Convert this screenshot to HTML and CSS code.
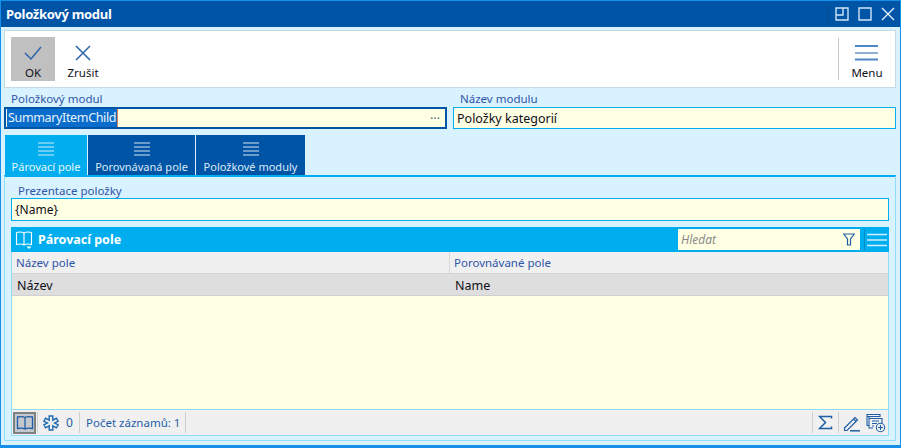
FILE: index.html
```html
<!DOCTYPE html>
<html lang="cs">
<head>
    <meta charset="UTF-8">
    <title>Položkový modul</title>
    <link rel="stylesheet" href="styles.css">
</head>
<body>
    <div class="window">
        <div class="titlebar">
            <div class="title">Položkový modul</div>
            <div class="win-buttons">
                <svg width="18" height="18" viewBox="0 0 18 18" fill="none" stroke="#cfe6f7" stroke-width="1.4"><path d="M3 3h12v12H3zM3 10h7V3"/></svg>
                <svg width="18" height="18" viewBox="0 0 18 18" fill="none" stroke="#cfe6f7" stroke-width="1.4"><path d="M3 3h12v12H3z"/></svg>
                <svg width="18" height="18" viewBox="0 0 18 18" fill="none" stroke="#e4f1fb" stroke-width="1.4"><path d="M3 3l12 12M15 3L3 15"/></svg>
            </div>
        </div>
        <div class="content">
            <div class="toolbar">
                <div class="tool tool-active">
                    <svg width="20" height="20" viewBox="0 0 20 20" fill="none" stroke="#2a64a8" stroke-width="1.5"><path d="M2 10l6 6L18 4"/></svg>
                    <span>OK</span>
                </div>
                <div class="tool">
                    <svg width="20" height="20" viewBox="0 0 20 20" fill="none" stroke="#2a64a8" stroke-width="1.5"><path d="M3 3l14 14M17 3L3 17"/></svg>
                    <span>Zrušit</span>
                </div>
                <div class="tool tool-menu">
                    <svg width="24" height="20" viewBox="0 0 24 20"><path d="M0 3h23" stroke="#4d88c4" stroke-width="2"/><path d="M0 10h23" stroke="#1f5ea6" stroke-width="1"/><path d="M0 16.500h23" stroke="#4d88c4" stroke-width="2"/></svg>
                    <span>Menu</span>
                </div>
            </div>

            <div class="fields">
                <div class="field">
                    <label class="field-label">Položkový modul</label>
                    <div class="input input-focus">
                        <span class="selected">SummaryItemChild</span>
                        <span class="dots">···</span>
                    </div>
                </div>
                <div class="field">
                    <label class="field-label">Název modulu</label>
                    <div class="input">Položky kategorií</div>
                </div>
            </div>

            <div class="tabs">
                <div class="tab tab-active">
                    <svg class="tab-icon" width="16" height="14" viewBox="0 0 16 14"><path d="M0 1h16M0 5h16M0 9h16M0 13h16" stroke="#8fd8f7" stroke-width="1.500"/></svg>
                    <span>Párovací pole</span>
                </div>
                <div class="tab tab-two">
                    <svg class="tab-icon" width="16" height="14" viewBox="0 0 16 14"><path d="M0 1h16M0 5h16M0 9h16M0 13h16" stroke="#8fb4d8" stroke-width="1.500"/></svg>
                    <span>Porovnávaná pole</span>
                </div>
                <div class="tab tab-three">
                    <svg class="tab-icon" width="16" height="14" viewBox="0 0 16 14"><path d="M0 1h16M0 5h16M0 9h16M0 13h16" stroke="#8fb4d8" stroke-width="1.500"/></svg>
                    <span>Položkové moduly</span>
                </div>
            </div>

            <div class="panel">
                <label class="field-label panel-label">Prezentace položky</label>
                <div class="input panel-input">{Name}</div>

                <div class="grid">
                    <div class="grid-head">
                        <svg width="18" height="19" viewBox="0 0 18 19" fill="none" stroke="#fff" stroke-width="1.100"><path d="M9 3C7.500 2 3.500 2 1.500 2.500v12c2-.5 6-.5 7.500.5 1.500-1 5.500-1 7.500-.5v-12C14.500 2 10.500 2 9 3zM9 3v12"/><path d="M11.500 16.500h5l-2.500 2.500z" fill="#fff" stroke="none"/></svg>
                        <div class="grid-title">Párovací pole</div>
                        <div class="search">
                            <span>Hledat</span>
                            <svg width="12" height="13" viewBox="0 0 12 13" fill="none" stroke="#1f5ea6" stroke-width="1.200"><path d="M.7 1h10.600L7.500 6v6h-3V6z"/></svg>
                        </div>
                        <div class="grid-menu">
                            <svg width="20" height="14" viewBox="0 0 20 14" stroke="#cdeefc"><path d="M0 1.500h20M0 7h20M0 12.500h20" stroke-width="1.300"/></svg>
                        </div>
                    </div>
                    <div class="grid-row grid-cols">
                        <div class="cell">Název pole</div>
                        <div class="cell">Porovnávané pole</div>
                    </div>
                    <div class="grid-row grid-data">
                        <div class="cell">Název</div>
                        <div class="cell">Name</div>
                    </div>
                    <div class="grid-empty"></div>
                    <div class="statusbar">
                        <div class="status-btn">
                            <svg width="18" height="16" viewBox="0 0 18 16" fill="none" stroke="#1f5ea6" stroke-width="1.300"><path d="M9 2.500C7.500 1.500 4 1.500 1.500 2v11.500c2.500-.5 6-.5 7.500.5 1.500-1 5-1 7.500-.5V2C14 1.500 10.500 1.500 9 2.500zM9 2.500V14"/></svg>
                        </div>
                        <div class="status-item status-snow">
                            <svg width="16" height="16" viewBox="0 0 16 16" fill="none" stroke="#1f6ab0" stroke-width="1.400"><path d="M6.200 1h3.600v4.200l3.600-2.100 1.800 3.100L11.600 8l3.600 1.800-1.800 3.100-3.600-2.100V15H6.200v-4.200l-3.600 2.100L.8 9.800 4.400 8 .8 6.200l1.800-3.100 3.600 2.100z"/></svg>
                            <span>0</span>
                        </div>
                        <div class="status-item status-count">Počet záznamů: 1</div>
                        <div class="status-spacer"></div>
                        <div class="status-icon">
                            <svg width="15" height="15" viewBox="0 0 15 15" fill="none" stroke="#1f5ea6" stroke-width="1.500"><path d="M13.500 3.500V1.500H1.500L7.500 7.500 1.500 13.500H13.500V11.500"/></svg>
                        </div>
                        <div class="status-icon">
                            <svg width="18" height="18" viewBox="0 0 18 18" fill="none" stroke="#1f5ea6" stroke-width="1.200"><path d="M1.500 14L12 3.500 14.500 6 4 16.500H1.500zM10.500 5L13 7.500"/><path d="M7 16.800h10" stroke-width="1.500"/></svg>
                        </div>
                        <div class="status-add">
                            <svg width="20" height="20" viewBox="0 0 20 20" fill="none" stroke="#1f5ea6" stroke-width="1.100"><path d="M1 1.500h13v2H1zM1 3.500v9h2M3 4v11h4M3 5.500h13v5M6 8h7M6 10.500h5M6 13h2"/><circle cx="14.500" cy="14.500" r="4.200" fill="#f0f0f0"/><path d="M14.500 12v5M12 14.500h5"/></svg>
                        </div>
                    </div>
                </div>
            </div>
        </div>
    </div>
</body>
</html>
```
FILE: styles.css
```css
* {
    margin: 0;
    padding: 0;
    box-sizing: border-box;
}

body {
    width: 901px;
    height: 448px;
    overflow: hidden;
    font-family: "Noto Sans", "Open Sans", sans-serif;
    font-size: 12px;
    color: #10101a;
}

.window {
    width: 901px;
    height: 448px;
    display: flex;
    flex-direction: column;
    background: #d9f2ff;
    border: 1px solid #1590ea;
    border-width: 1px 1px 3px 1px;
}

.titlebar {
    height: 26px;
    flex: none;
    background: #0054a6;
    display: flex;
    align-items: center;
    justify-content: space-between;
    padding: 0 3px 0 5px;
}

.title {
    color: #fff;
    font-size: 13px;
    font-weight: 700;
    letter-spacing: -0.3px;
}

.win-buttons {
    display: flex;
    gap: 5px;
    padding-left: 4px;
    border-left: 1px solid #0c4a8c;
}

.content {
    flex: 1;
    display: flex;
    flex-direction: column;
    padding: 3px 4px 4px 3px;
}

.toolbar {
    height: 58px;
    flex: none;
    background: #fff;
    border: 1px solid #c4dbe6;
    display: flex;
    align-items: center;
    padding: 0 0 0 6px;
    gap: 6px;
}

.tool {
    width: 44px;
    height: 44px;
    display: flex;
    flex-direction: column;
    align-items: center;
    justify-content: flex-end;
    gap: 2px;
    padding-bottom: 1px;
    font-size: 11.500px;
    line-height: 15px;
}

.tool-active {
    background: #c0c0c0;
}

.tool-menu {
    margin-left: auto;
    width: 57px;
    border-left: 1px solid #c8c8c8;
    height: 42px;
    padding-bottom: 0;
}

.fields {
    display: flex;
    gap: 6px;
    margin-top: 3px;
    flex: none;
}

.field {
    flex: 1;
    min-width: 0;
}

.field-label {
    display: block;
    height: 16px;
    line-height: 16px;
    font-size: 11.500px;
    color: #2f55a8;
    padding-left: 7px;
}

.input {
    height: 22px;
    background: #ffffe3;
    border: 1px solid #00aeef;
    display: flex;
    align-items: center;
    justify-content: space-between;
    padding: 0 3px;
    font-size: 12.500px;
    white-space: nowrap;
}

.input-focus {
    border: 2px solid #0054a6;
    padding: 0 2px 0 1px;
}

.selected {
    background: #0a6ccb;
    color: #e8f3fb;
    height: 18px;
    line-height: 18px;
    padding: 0 1px;
    letter-spacing: -0.35px;
    border-right: 1px solid #d8804a;
}

.dots {
    color: #567;
    padding-right: 3px;
}

.tabs {
    display: flex;
    gap: 1px;
    margin-top: 6px;
    padding-left: 1px;
    flex: none;
}

.tab {
    height: 40px;
    width: 82px;
    background: #0054a6;
    color: #dbeaf6;
    font-size: 11px;
    display: flex;
    flex-direction: column;
    align-items: center;
    justify-content: flex-end;
    gap: 3px;
    line-height: 16px;
    white-space: nowrap;
}

.tab-two {
    width: 107px;
}

.tab-three {
    width: 109px;
}

.tab-active {
    background: #00aeef;
    color: #e6f7fe;
}

.panel {
    flex: 1;
    display: flex;
    flex-direction: column;
    border: 1px solid #8fdcfb;
    border-top: 2px solid #00aeef;
    padding: 6px 6px 4px 6px;
    min-height: 0;
}

.panel-label {
    height: 15px;
}

.panel-input {
    height: 23px;
    flex: none;
    font-size: 12px;
}

.grid {
    flex: 1;
    margin-top: 6px;
    display: flex;
    flex-direction: column;
    min-height: 0;
    border: solid #8fdcfb;
    border-width: 0 1px 1px 1px;
}

.grid-head {
    height: 25px;
    margin: 0 -1px;
    flex: none;
    background: #00aeef;
    display: flex;
    align-items: center;
    padding-left: 4px;
    color: #fff;
}

.grid-title {
    flex: 1;
    font-size: 12.500px;
    font-weight: 700;
    padding-left: 5px;
}

.search {
    width: 182px;
    height: 21px;
    background: #ffffe3;
    color: #8a8a8a;
    font-style: italic;
    display: flex;
    align-items: center;
    justify-content: space-between;
    padding: 0 5px 0 3px;
}

.grid-menu {
    margin-left: 4px;
    width: 25px;
    height: 21px;
    border-left: 1px solid #0a8cc6;
    display: flex;
    align-items: center;
    justify-content: center;
}

.grid-row {
    display: flex;
    flex: none;
}

.cell {
    width: 50%;
    padding-left: 4px;
}

.grid-cols {
    height: 22px;
    align-items: center;
    background: #f0f0f0;
    border-bottom: 1px solid #d4d4d4;
    color: #2f55a8;
    font-size: 11.500px;
}

.grid-cols .cell:first-child {
    border-right: 1px solid #d8d8d8;
    height: 21px;
    line-height: 21px;
}

.grid-data {
    height: 22px;
    align-items: center;
    padding-top: 2px;
    background: #dedede;
    border-bottom: 1px solid #d0d0d0;
    font-size: 12.500px;
}

.grid-data .cell {
    padding-left: 5px;
}

.grid-empty {
    flex: 1;
    background: #ffffe3;
}

.statusbar {
    height: 26px;
    flex: none;
    background: #f0f0f0;
    border-top: 1px solid #8fdcfb;
    display: flex;
    align-items: center;
    color: #1f5ea6;
}

.status-btn {
    width: 23px;
    height: 22px;
    margin-left: 1px;
    background: #c2c8cc;
    border: 2px solid #808080;
    display: flex;
    align-items: center;
    justify-content: center;
}

.status-item {
    height: 21px;
    display: flex;
    align-items: center;
    margin-left: 1px;
    border-left: 1px solid #cfcfcf;
}

.status-snow {
    width: 42px;
    padding-left: 5px;
}

.status-snow span {
    padding-left: 7px;
}

.status-count {
    width: 106px;
    padding-left: 6px;
    margin-left: 0;
    font-size: 11.500px;
}

.status-spacer {
    flex: 1;
    height: 21px;
    border-left: 1px solid #cfcfcf;
}

.status-icon {
    width: 26px;
    height: 21px;
    display: flex;
    align-items: center;
    justify-content: center;
    border-left: 1px solid #cfcfcf;
}

.status-add {
    width: 24px;
    display: flex;
    justify-content: center;
}
```
